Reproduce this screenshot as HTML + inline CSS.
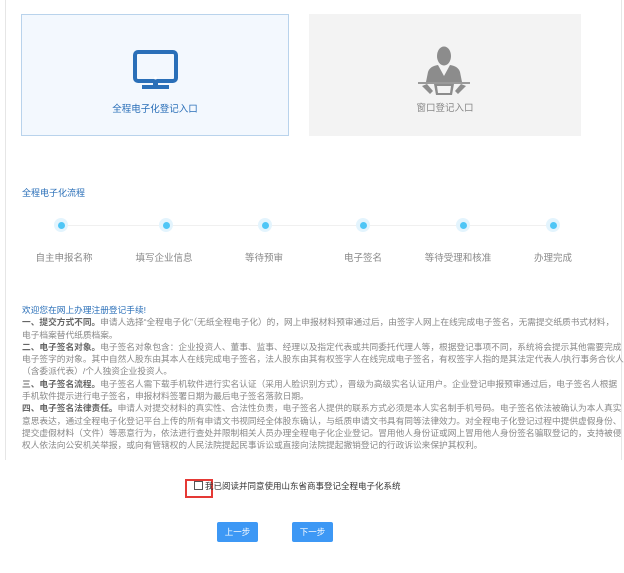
<!DOCTYPE html>
<html><head><meta charset="utf-8"><style>
*{margin:0;padding:0;box-sizing:border-box}
body{width:624px;height:573px;background:#fff;position:relative;overflow:hidden;font-family:"Liberation Sans","Noto Sans CJK SC",sans-serif}
.bl{position:absolute;left:5px;top:0;width:1px;height:460px;background:#e6e6e6}
.br{position:absolute;left:621px;top:0;width:1px;height:460px;background:#e6e6e6}
.card{position:absolute;top:14px;height:122px;width:268px}
.c1{left:21px;background:#f3f8fe;border:1px solid #b9d3ec}
.c2{left:309px;width:272px;background:#f3f3f3}
.ct{position:absolute;width:100%;text-align:center;font-size:9.5px}
.ab{position:absolute;white-space:nowrap}
.dot{position:absolute;top:218px;width:14px;height:14px;border-radius:50%;background:#e3f4fd}
.dot:after{content:"";position:absolute;left:3.5px;top:3.5px;width:7px;height:7px;border-radius:50%;background:#4fc6f6}
.lbl{position:absolute;top:250px;width:90px;text-align:center;font-size:9.5px;color:#888}
.tx{position:absolute;left:22px;top:304px;font-size:8.7px;line-height:12.3px;color:#888;white-space:nowrap}
.tx b{color:#666;font-weight:bold}
.btn{position:absolute;top:522px;width:41px;height:20px;background:#3d98f5;color:#fff;font-size:8.5px;text-align:center;line-height:20px;border-radius:2px}
</style></head><body>
<div class="bl"></div><div class="br"></div>
<div class="card c1">
<svg style="position:absolute;left:111px;top:35px" width="45" height="40" viewBox="0 0 45 40"><rect x="2" y="2" width="41" height="29" rx="3" fill="none" stroke="#2a6fb8" stroke-width="4"/><circle cx="22.5" cy="28" r="1.5" fill="#fff"/><rect x="20" y="31" width="5" height="5" fill="#2a6fb8"/><rect x="9" y="35" width="27" height="4" fill="#2a6fb8"/></svg>
<div class="ct" style="color:#2a6fb8;top:86px">全程电子化登记入口</div></div>
<div class="card c2">
<svg style="position:absolute;left:109px;top:32px" width="52" height="50" viewBox="0 0 52 50"><ellipse cx="26" cy="10" rx="7" ry="9.5" fill="#8c8c8c"/><path d="M10 26 Q12 20 20 19 L26 30 L32 19 Q40 20 42 26 L44 36 L34 36 L26 40 L18 36 L8 36 Z" fill="#8c8c8c"/><rect x="0" y="36" width="52" height="2" fill="#9a9a9a"/><path d="M16 38 L36 38 L34 49 L18 49 Z" fill="#8c8c8c"/><path d="M19 40 L33 40 L32 47 L20 47 Z" fill="#f3f3f3"/><path d="M4 40 L12 48 L15 45 L9 38Z M48 40 L40 48 L37 45 L43 38Z" fill="#8c8c8c"/></svg>
<div class="ct" style="color:#888;top:86px">窗口登记入口</div></div>
<div class="ab" style="left:22px;top:186px;font-size:9px;color:#2a6fb8">全程电子化流程</div>
<div class="ab" style="left:61px;top:225px;width:492px;height:1px;background:#f0f0f0"></div>
<div class="dot" style="left:54px"></div><div class="dot" style="left:159px"></div><div class="dot" style="left:258px"></div><div class="dot" style="left:356px"></div><div class="dot" style="left:456px"></div><div class="dot" style="left:546px"></div>
<div class="lbl" style="left:19px">自主申报名称</div><div class="lbl" style="left:119px">填写企业信息</div><div class="lbl" style="left:219px">等待预审</div><div class="lbl" style="left:318px">电子签名</div><div class="lbl" style="left:413px">等待受理和核准</div><div class="lbl" style="left:508px">办理完成</div>
<div class="tx"><div style="color:#2a6fb8">欢迎您在网上办理注册登记手续!</div>
<div><b>一、提交方式不同。</b>申请人选择“全程电子化”（无纸全程电子化）的，网上申报材料预审通过后，由签字人网上在线完成电子签名，无需提交纸质书式材料，</div>
<div>电子档案替代纸质档案。</div>
<div><b>二、电子签名对象。</b>电子签名对象包含：企业投资人、董事、监事、经理以及指定代表或共同委托代理人等，根据登记事项不同，系统将会提示其他需要完成</div>
<div>电子签字的对象。其中自然人股东由其本人在线完成电子签名，法人股东由其有权签字人在线完成电子签名，有权签字人指的是其法定代表人/执行事务合伙人</div>
<div>（含委派代表）/个人独资企业投资人。</div>
<div><b>三、电子签名流程。</b>电子签名人需下载手机软件进行实名认证（采用人脸识别方式），晋级为高级实名认证用户。企业登记申报预审通过后，电子签名人根据</div>
<div>手机软件提示进行电子签名，申报材料签署日期为最后电子签名落款日期。</div>
<div><b>四、电子签名法律责任。</b>申请人对提交材料的真实性、合法性负责，电子签名人提供的联系方式必须是本人实名制手机号码。电子签名依法被确认为本人真实</div>
<div>意思表达，通过全程电子化登记平台上传的所有申请文书视同经全体股东确认，与纸质申请文书具有同等法律效力。对全程电子化登记过程中提供虚假身份、</div>
<div>提交虚假材料（文件）等恶意行为，依法进行查处并限制相关人员办理全程电子化企业登记。冒用他人身份证或网上冒用他人身份签名骗取登记的，支持被侵</div>
<div>权人依法向公安机关举报，或向有管辖权的人民法院提起民事诉讼或直接向法院提起撤销登记的行政诉讼来保护其权利。</div></div>
<div class="ab" style="left:185px;top:479px;width:28px;height:19px;border:2px solid #e53935"></div>
<div class="ab" style="left:194px;top:481px;width:9px;height:9px;border:1px solid #555;background:#fff"></div>
<div class="ab" style="left:205px;top:480px;font-size:8.5px;color:#333">我已阅读并同意使用山东省商事登记全程电子化系统</div>
<div class="btn" style="left:217px">上一步</div><div class="btn" style="left:292px">下一步</div>
</body></html>
